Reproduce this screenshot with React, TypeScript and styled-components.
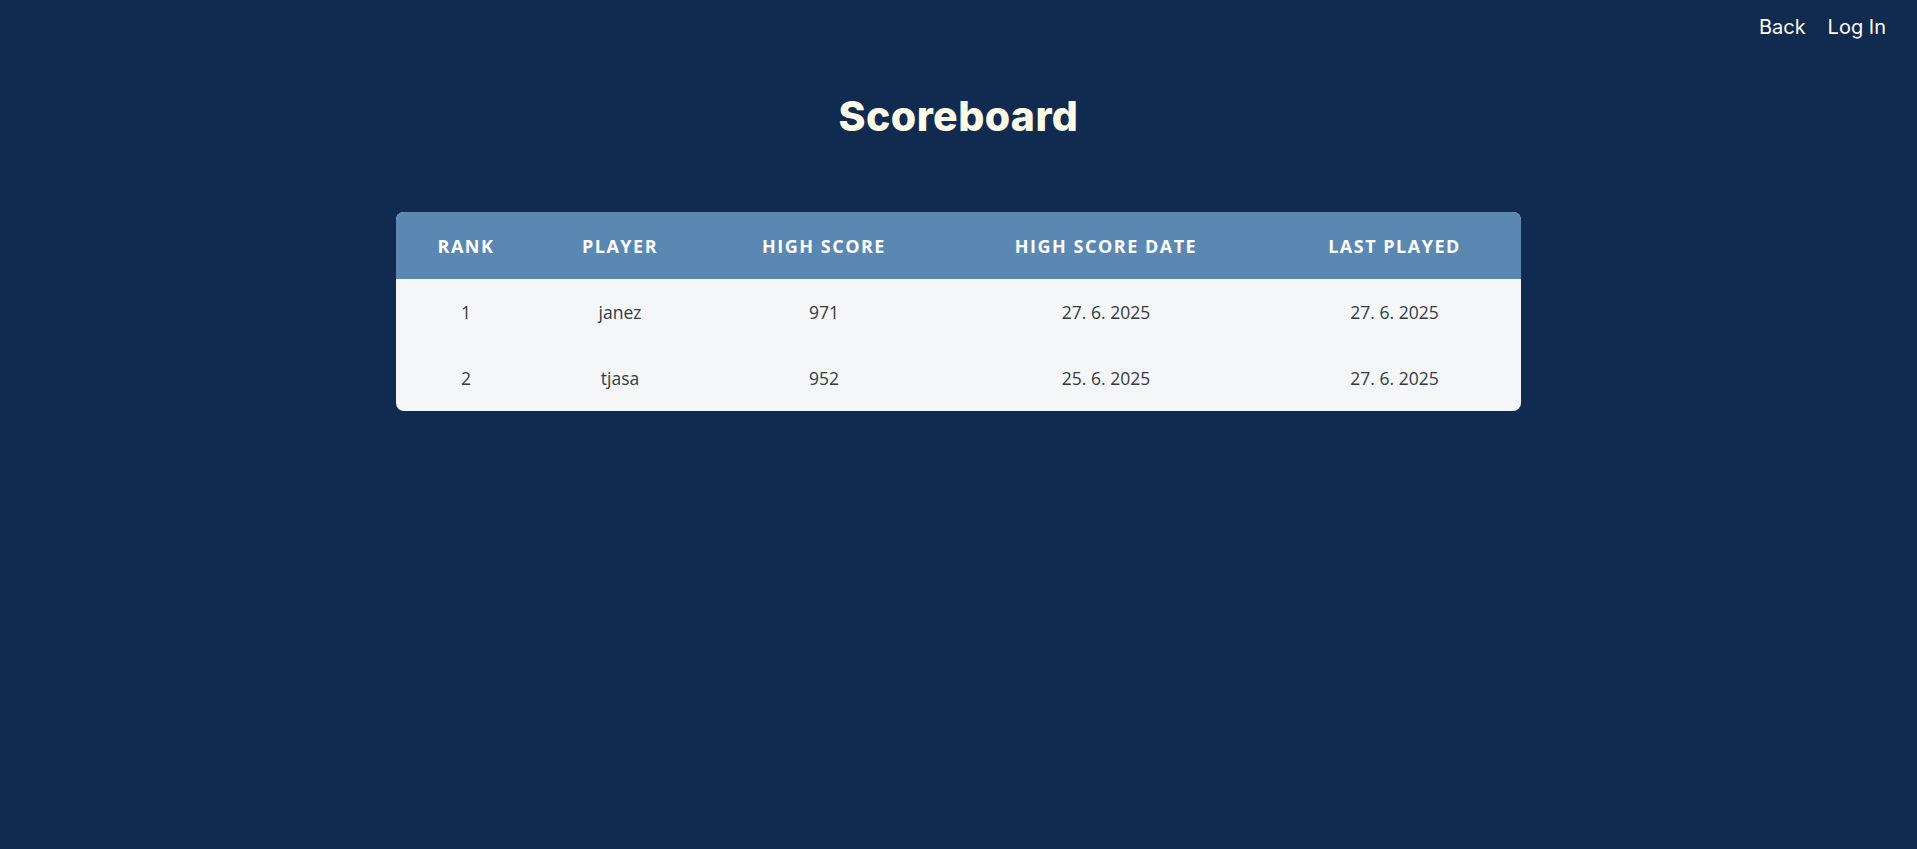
import React from "react";
import styled, { createGlobalStyle } from "styled-components";

const Global = createGlobalStyle`
  html, body { margin: 0; padding: 0; }
  body {
    background: #112b50;
    font-family: "Open Sans", "Noto Sans", sans-serif;
  }
`;

const Page = styled.div`
  display: flex;
  flex-direction: column;
`;

const Nav = styled.nav`
  display: flex;
  justify-content: flex-end;
  gap: 22px;
  padding: 15px 31px 0 0;
  height: 33px;
`;

const NavLink = styled.a`
  font-family: "Inter", "Open Sans", sans-serif;
  font-size: 20px;
  line-height: 24px;
  color: #fffbea;
  text-decoration: none;
  cursor: pointer;
`;

const Title = styled.h1`
  margin: 43px 0 0;
  text-align: center;
  font-family: "Inter", sans-serif;
  font-weight: 800;
  font-size: 41px;
  line-height: 50px;
  color: #fffbe8;
  letter-spacing: 0.4px;
`;

const TableWrap = styled.div`
  margin: 71px auto 0;
  width: 1125px;
  border-radius: 8px;
  overflow: hidden;
  background: #f4f6f8;
`;

const Table = styled.table`
  width: 100%;
  border-collapse: collapse;
  table-layout: fixed;
`;

const Th = styled.th<{ $w: number }>`
  width: ${(p) => p.$w}px;
  height: 67px;
  padding: 0;
  background: #5b88b2;
  color: #ffffff;
  font-size: 18px;
  font-weight: 700;
  letter-spacing: 1.5px;
  text-transform: uppercase;
  text-align: center;
`;

const Td = styled.td`
  height: 66px;
  padding: 0;
  text-align: center;
  font-size: 17.5px;
  color: #333b45;
`;

const columns = [
  { label: "Rank", w: 140 },
  { label: "Player", w: 168 },
  { label: "High Score", w: 240 },
  { label: "High Score Date", w: 324 },
  { label: "Last Played", w: 253 },
];

const rows = [
  ["1", "janez", "971", "27. 6. 2025", "27. 6. 2025"],
  ["2", "tjasa", "952", "25. 6. 2025", "27. 6. 2025"],
];

export default function App() {
  return (
    <Page>
      <Global />
      <Nav>
        <NavLink>Back</NavLink>
        <NavLink>Log In</NavLink>
      </Nav>
      <Title>Scoreboard</Title>
      <TableWrap>
        <Table>
          <thead>
            <tr>
              {columns.map((c) => (
                <Th key={c.label} $w={c.w}>
                  {c.label}
                </Th>
              ))}
            </tr>
          </thead>
          <tbody>
            {rows.map((r) => (
              <tr key={r[0]}>
                {r.map((v, i) => (
                  <Td key={i}>{v}</Td>
                ))}
              </tr>
            ))}
          </tbody>
        </Table>
      </TableWrap>
    </Page>
  );
}
